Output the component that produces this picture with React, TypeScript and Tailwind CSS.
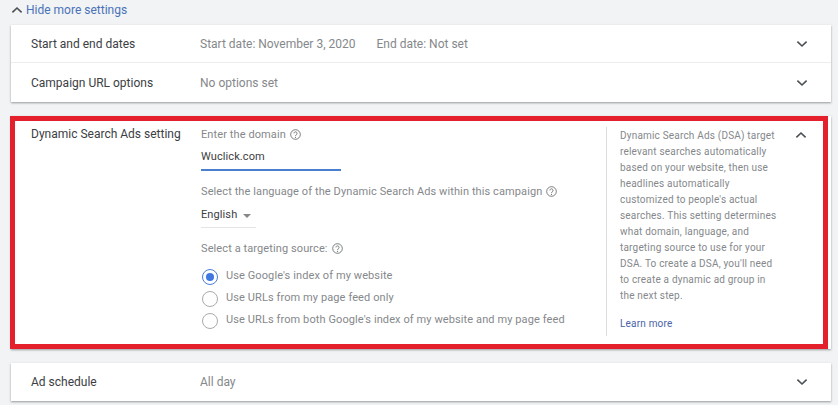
import React from 'react';

const Chevron = ({ up = false }: { up?: boolean }) => (
  <svg width="12" height="8" viewBox="0 0 12 8" className={up ? 'rotate-180' : ''}>
    <path d="M1.4 1.6 6 6l4.6-4.4" fill="none" stroke="#4a4f54" strokeWidth="1.6" />
  </svg>
);

const Help = () => (
  <svg width="11" height="11" viewBox="0 0 24 24" className="mb-[2px] shrink-0">
    <circle cx="12" cy="12" r="10.5" fill="none" stroke="#5f6368" strokeWidth="1.8" />
    <path d="M8.6 9.6a3.4 3.4 0 1 1 5.6 2.6c-1.2 1-2.2 1.6-2.2 3.2" fill="none" stroke="#5f6368" strokeWidth="1.8" />
    <circle cx="12" cy="18.2" r="1.2" fill="#5f6368" />
  </svg>
);

const Radio = ({ checked = false }: { checked?: boolean }) => (
  <span className={`flex h-4 w-4 shrink-0 items-center justify-center rounded-full border-[1.5px] ${checked ? 'border-[#4a7fd8]' : 'border-[#a8abad]'}`}>
    {checked && <span className="h-2 w-2 rounded-full bg-[#3f78e0]" />}
  </span>
);

const Row = ({ label, value, extra, border, tall }: { label: string; value: string; extra?: string; border?: boolean; tall?: boolean }) => (
  <div className={`flex items-center pl-5 pr-[23px] ${tall ? 'h-[39px]' : 'h-[38px]'} ${border ? 'border-b border-[#eceded]' : ''}`}>
    <div className="w-[169px] text-[#3c4043]">{label}</div>
    <div className="flex flex-1 gap-[21px] text-[#85888b]">
      <span>{value}</span>
      {extra && <span>{extra}</span>}
    </div>
    <Chevron />
  </div>
);

export default function App() {
  return (
    <div className="h-[405px] w-[838px] overflow-hidden bg-[#f1f3f4] font-['Roboto',sans-serif] text-xs">
      <div className="flex h-[25px] items-center gap-[3px] pb-[6px] pl-[11px] text-[#4a72b8]">
        <Chevron up />
        <span>Hide more settings</span>
      </div>

      <div className="ml-[11px] w-[820px] bg-white shadow-[0_1px_2px_rgba(60,64,67,0.5)]">
        <Row label="Start and end dates" value="Start date: November 3, 2020" extra="End date: Not set" border />
        <Row label="Campaign URL options" value="No options set" tall />
      </div>

      <div className="ml-[11px] mt-[14px] w-[820px] bg-white shadow-[0_1px_2px_rgba(60,64,67,0.5)]">
        <div className="-ml-px flex h-[233px] w-[818px] border-[5px] border-[#e3202b] pl-4 pt-[4px]">
          <div className="w-[170px] shrink-0 pt-[1px] text-[#3c4043]">Dynamic Search Ads setting</div>

          <div className="w-[405px] shrink-0 text-[11px] tracking-[0.1px] text-[#85888b]">
            <div className="mt-[3px] flex h-[14px] items-center gap-[4px]">
              Enter the domain <Help />
            </div>
            <div className="mt-[8px] text-[#3c4043]">Wuclick.com</div>
            <div className="mt-[4px] h-[2px] w-[140px] bg-[#4a7fd0]" />

            <div className="mt-[15px] flex h-[14px] items-center gap-[4px]">
              Select the language of the Dynamic Search Ads within this campaign <Help />
            </div>
            <div className="mt-[8px] flex h-[20px] w-[55px] items-start gap-[6px] border-b border-[#e3e4e5] text-[#3c4043]">
              English
              <span className="mt-[6px] h-0 w-0 border-x-[4px] border-t-[4px] border-x-transparent border-t-[#85888b]" />
            </div>

            <div className="mt-[15px] flex h-[14px] items-center gap-[4px]">
              Select a targeting source: <Help />
            </div>
            <div className="mt-[12px] flex flex-col gap-[6px] pl-[1px]">
              <div className="flex h-4 items-center gap-2"><Radio checked />Use Google's index of my website</div>
              <div className="flex h-4 items-center gap-2"><Radio />Use URLs from my page feed only</div>
              <div className="flex h-4 items-center gap-2"><Radio />Use URLs from both Google's index of my website and my page feed</div>
            </div>
          </div>

          <div className="mb-[8px] mt-[2px] w-[182px] shrink-0 border-l border-[#dadcdd] pl-[13px] pt-[1px] text-[10px] leading-4 tracking-[0.19px] text-[#85888b]">
            <p className="w-[157px]">
              Dynamic Search Ads (DSA) target relevant searches automatically based on your website, then use headlines automatically customized to people's actual searches. This setting determines what domain, language, and targeting source to use for your DSA. To create a DSA, you'll need to create a dynamic ad group in the next step.
            </p>
            <div className="mt-3 text-[#4a62a8]">Learn more</div>
          </div>

          <div className="pl-[7px] pt-[6px]"><Chevron up /></div>
        </div>
      </div>

      <div className="ml-[11px] mt-[14px] w-[820px] bg-white shadow-[0_1px_2px_rgba(60,64,67,0.5)]">
        <Row label="Ad schedule" value="All day" />
      </div>
    </div>
  );
}
